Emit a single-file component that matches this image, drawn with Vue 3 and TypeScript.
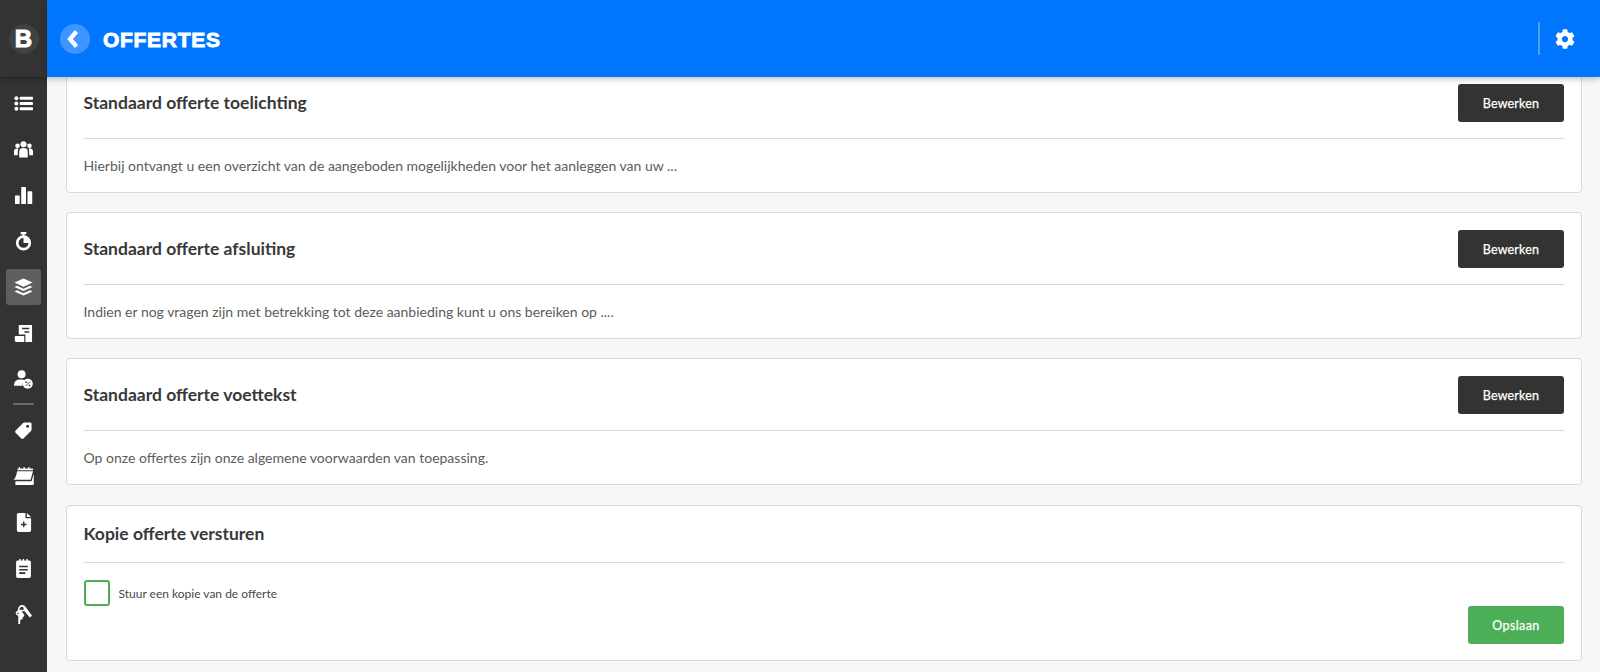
<script setup lang="ts">
interface Card { title: string; text: string }
const cards: Card[] = [
  { title: 'Standaard offerte toelichting', text: 'Hierbij ontvangt u een overzicht van de aangeboden mogelijkheden voor het aanleggen van uw ...' },
  { title: 'Standaard offerte afsluiting', text: 'Indien er nog vragen zijn met betrekking tot deze aanbieding kunt u ons bereiken op ....' },
  { title: 'Standaard offerte voettekst', text: 'Op onze offertes zijn onze algemene voorwaarden van toepassing.' },
]
</script>

<template>
  <div class="app">
    <aside class="side">
      <div class="brand"><span class="logo">B</span></div>
      <nav class="nav">
        <div class="item"><svg viewBox="0 0 20 20"><circle cx="2.500" cy="4.500" r="2.100"/><circle cx="2.500" cy="10" r="2.100"/><circle cx="2.500" cy="15.500" r="2.100"/><rect x="6" y="3" width="14" height="3" rx=".8"/><rect x="6" y="8.500" width="14" height="3" rx=".8"/><rect x="6" y="14" width="14" height="3" rx=".8"/></svg></div>
        <div class="item"><svg viewBox="0 0 20 20"><circle cx="10" cy="4.500" r="3.200"/><circle cx="3.700" cy="6" r="2.400"/><circle cx="16.300" cy="6" r="2.400"/><path d="M5.500 18.500v-6C5.500 9.500 7 8.500 10 8.500s4.500 1 4.500 4v6z"/><path d="M0 16v-4c0-2.200 1.500-3.200 4.700-3.200-.5.900-.7 2.200-.7 3.700V16zM20 16v-4c0-2.200-1.500-3.200-4.700-3.200.5.900.7 2.200.7 3.700V16z"/></svg></div>
        <div class="item"><svg viewBox="0 0 20 20"><rect x="1" y="10" width="5" height="9" rx=".5"/><rect x="7.600" y="1" width="5" height="18" rx=".5"/><rect x="14.200" y="5.500" width="5" height="13.500" rx=".5"/></svg></div>
        <div class="item"><svg viewBox="0 0 20 20"><rect x="7" y="0" width="6" height="2.400" rx=".6"/><rect x="9" y="1.500" width="2" height="3"/><path fill-rule="evenodd" d="M10 3.500a8 8 0 1 1 0 16 8 8 0 0 1 0-16zm0 2.800a5.200 5.200 0 1 0 5.200 5.200H10z"/></svg></div>
        <div class="item active"><svg viewBox="0 0 20 20"><path d="M10 .5l9.500 4.300L10 9.100.5 4.800z"/><path d="M3.200 8.200L10 11.300l6.800-3.100 2.700 1.300L10 13.800.5 9.500z"/><path d="M3.200 12.900L10 16l6.800-3.100 2.700 1.300L10 18.500.5 14.200z"/></svg></div>
        <div class="item"><svg viewBox="0 0 20 20"><path fill-rule="evenodd" d="M5 1h14v18h-7v-8H5zM8.500 4v1.600h7.500V4zM11 7.500v1.600h5V7.500z"/><path d="M2 12.500h8.800V19H3c-1.300 0-2.200-.8-2.200-2.500V14c0-1 .5-1.500 1.200-1.500z"/></svg></div>
        <div class="item"><svg viewBox="0 0 20 20"><circle cx="8" cy="4.500" r="4.200"/><path d="M0 16.500c0-4.500 2.500-6.500 7-6.500 2 0 3.500.4 4.500 1.200A6 6 0 0 0 9 16.500z"/><circle cx="14.500" cy="14.500" r="5.300"/><path d="M12.300 16.700l4.400-4.400" stroke="#333" stroke-width="1"/><circle cx="12.700" cy="12.800" r=".9" fill="#333"/><circle cx="16.300" cy="16.200" r=".9" fill="#333"/></svg></div>
        <div class="rule"></div>
        <div class="item"><svg viewBox="0 0 20 20"><path fill-rule="evenodd" d="M11 1.500h6c.9 0 1.500.6 1.500 1.500v6c0 .6-.2 1-.6 1.400L10 18.300c-.7.700-1.600.7-2.300 0l-6-6c-.7-.7-.7-1.600 0-2.300l7.900-7.900c.4-.4.800-.6 1.400-.6zm3.300 2.400a1.600 1.600 0 1 0 0 3.200 1.600 1.600 0 0 0 0-3.200z"/></svg></div>
        <div class="item wide"><svg viewBox="0 0 24 20"><path d="M6 1.500h1V0h1.300v1.500h3.700V0h1.300v1.500h3.700V0h1.300v1.500H22v1.800H5.500z"/><path d="M5.300 4.500H22l-2.500 9H1.500c2.300-2 3.200-5.500 3.800-9z"/><path d="M22.800 7v10.500c0 .8-.6 1.500-1.500 1.500H3.500v-4h17z"/></svg></div>
        <div class="item"><svg viewBox="0 0 20 20"><path fill-rule="evenodd" d="M5 0h7v5.500h6V18c0 1.200-.8 2-2 2H5c-1.200 0-2-.8-2-2V2c0-1.200.8-2 2-2zm4.500 9v2.200H7.300v1.600h2.200V15h1.500v-2.200h2.200v-1.600H11V9z"/><path d="M13.500 0L18 4.200h-4.500z"/></svg></div>
        <div class="item"><svg viewBox="0 0 20 20"><path fill-rule="evenodd" d="M4 1.500h1.500V0H7v1.500h2.200V0h1.500v1.500H13V0h1.500v1.500H16c1.100 0 1.800.7 1.800 1.800V18c0 1.200-.7 2-1.800 2H4c-1.100 0-1.800-.8-1.800-2V3.300c0-1.100.7-1.800 1.800-1.800zM5.500 7v1.700h9V7zM5.500 10.500v1.700h9v-1.700zM5.500 14v1.700h6.500V14z"/></svg></div>
        <div class="item"><svg viewBox="0 0 20 20"><path fill-rule="evenodd" d="M8.500 0c1.700 0 3 .9 3.800 2.200l6.700 9.100-2.400 1.900-6-7.100c-.6.400-1.200.6-1.800.6v1.600c1.300.4 2 1.300 2 2.400 0 .9-.6 1.600-1.700 2.100v2.200H7.600v.9H6.500v4.100H4.500v-8.500C2.900 10.900 1.800 9.900 1.800 8.500c0-1.300.9-2.200 2.300-2.500C4 2.700 5.700 0 8.500 0zm0 1.900c-1.600 0-2.600 1.300-2.600 2.600 0 .7.300 1.200.9 1.300.1-.6.500-1 1-1 .5 0 .8.300 1 .8.900-.1 1.400-.7 1.400-1.500 0-1.200-.6-2.200-1.700-2.200zM4.700 7.900c-.7 0-1.200.3-1.200 1s.5 1 1.100 1.200c.3-.6.300-1.500.1-2.200z"/></svg></div>
      </nav>
    </aside>

    <main class="main">
      <header class="top">
        <div class="back"><svg viewBox="0 0 14 18"><path d="M9.500 1.500L3 9l6.500 7.500" fill="none" stroke="#fff" stroke-width="4.200"/></svg></div>
        <h1 class="heading">OFFERTES</h1>
        <div class="spacer"></div>
        <div class="sep"></div>
        <svg class="gear" viewBox="0 0 512 512"><path fill="#fff" fill-rule="evenodd" d="M487.400 315.700l-42.600-24.600c4.300-23.200 4.300-47 0-70.200l42.600-24.600c4.900-2.800 7.100-8.600 5.500-14-11.100-35.600-30-67.800-54.700-94.600-3.800-4.100-10-5.100-14.800-2.300L380.800 110c-17.900-15.400-38.500-27.300-60.800-35.100V25.800c0-5.600-3.900-10.500-9.400-11.700-36.700-8.200-74.300-7.800-109.200 0-5.500 1.200-9.400 6.100-9.400 11.700V75c-22.200 7.900-42.800 19.800-60.800 35.100L88.700 85.500c-4.900-2.800-11-1.900-14.800 2.300-24.700 26.700-43.600 58.900-54.700 94.600-1.700 5.400.6 11.200 5.500 14L67.300 221c-4.300 23.200-4.300 47 0 70.200l-42.600 24.600c-4.900 2.800-7.100 8.600-5.500 14 11.100 35.600 30 67.800 54.700 94.600 3.800 4.100 10 5.100 14.800 2.300l42.600-24.600c17.900 15.400 38.500 27.300 60.800 35.100v49.200c0 5.600 3.900 10.500 9.400 11.700 36.700 8.200 74.300 7.800 109.200 0 5.500-1.200 9.400-6.100 9.400-11.700v-49.200c22.200-7.900 42.800-19.800 60.800-35.100l42.600 24.600c4.900 2.800 11 1.900 14.800-2.300 24.700-26.700 43.600-58.900 54.700-94.600 1.500-5.500-.7-11.300-5.600-14.100zM256 336c-44.100 0-80-35.900-80-80s35.900-80 80-80 80 35.900 80 80-35.900 80-80 80z"/></svg>
      </header>

      <div class="content">
        <section v-for="c in cards" :key="c.title" class="card">
          <div class="card-head">
            <h2 class="title">{{ c.title }}</h2>
            <button class="btn dark">Bewerken</button>
          </div>
          <p class="text">{{ c.text }}</p>
        </section>

        <section class="card last">
          <div class="card-head plain">
            <h2 class="title">Kopie offerte versturen</h2>
          </div>
          <label class="check"><span class="box"></span><span>Stuur een kopie van de offerte</span></label>
          <div class="actions"><button class="btn green">Opslaan</button></div>
        </section>
      </div>
    </main>
  </div>
</template>

<style>
html, body { margin: 0; background: #f7f7f7; }
</style>

<style scoped>
.app {
  display: flex;
  height: 672px;
  overflow: hidden;
  font-family: Lato, "Open Sans", sans-serif;
  color: #333;
}
.side {
  width: 47px;
  flex: none;
  background: #333;
}
.brand {
  height: 77px;
  display: flex;
  align-items: center;
  justify-content: center;
  box-shadow: 0 2px 4px rgba(0, 0, 0, .25);
}
.logo {
  width: 30px;
  height: 30px;
  border-radius: 50%;
  background: #414141;
  color: #fff;
  display: flex;
  align-items: center;
  justify-content: center;
  font: 700 24px/1 "Liberation Sans", sans-serif;
  -webkit-text-stroke: 1px #fff;
}
.nav { padding-top: 3px; }
.item {
  height: 46px;
  display: flex;
  align-items: center;
  justify-content: center;
}
.item svg { width: 19px; height: 19px; fill: #fff; }
.item.wide svg { width: 23px; height: 19px; }
.item.active { position: relative; }
.item.active::before {
  content: "";
  position: absolute;
  left: 6px;
  top: 5px;
  width: 35px;
  height: 36px;
  border-radius: 3px;
  background: #5f5f5f;
}
.item.active svg { position: relative; }
.rule { height: 2px; margin: 1px 13px 2px; background: #6a6a6a; }
.main {
  flex: 1;
  min-width: 0;
  display: flex;
  flex-direction: column;
}
.top {
  position: relative;
  z-index: 2;
  height: 77px;
  flex: none;
  background: #0076ff;
  display: flex;
  align-items: center;
  padding: 0 25px 0 13px;
  box-shadow: 0 2px 6px rgba(0, 0, 0, .25);
}
.back {
  width: 30px;
  height: 30px;
  border-radius: 50%;
  background: #3f95ff;
  display: flex;
  align-items: center;
  justify-content: center;
}
.back svg { width: 14px; height: 18px; margin-right: 2px; }
.heading {
  margin: 1px 0 0 13px;
  color: #fff;
  font: 700 21px/1 "Liberation Sans", sans-serif;
  letter-spacing: .7px;
  -webkit-text-stroke: .9px #fff;
}
.spacer { flex: 1; }
.sep { width: 2px; height: 33px; background: rgba(255, 255, 255, .3); margin-right: 15px; }
.gear { width: 20px; height: 20px; }
.content {
  margin-top: -11px;
  padding: 0 18px 0 19px;
  display: flex;
  flex-direction: column;
  gap: 19px;
}
.card {
  height: 127px;
  box-sizing: border-box;
  background: #fff;
  border: 1px solid #d9d9d9;
  border-radius: 4px;
  padding: 0 17px 0 16.500px;
}
.card.last { height: 156px; margin-top: 1px; }
.card-head {
  height: 72px;
  box-sizing: border-box;
  padding-top: 17px;
  display: flex;
  justify-content: space-between;
  border-bottom: 1px solid #d9d9d9;
}
.card-head.plain { height: 57px; padding-top: 0; align-items: center; }
.title {
  margin: 0;
  font-size: 17.500px;
  font-weight: 700;
  line-height: 38px;
  color: #383838;
}
.text {
  margin: 18px 0 0;
  font-size: 14px;
  line-height: 18px;
  color: #5c5c5c;
}
.btn {
  height: 38px;
  border: 0;
  border-radius: 3px;
  color: #fff;
  font: 400 12.500px Lato, sans-serif;
  letter-spacing: .2px;
  -webkit-text-stroke: .25px #fff;
}
.dark { width: 106px; background: #333; }
.green { width: 96px; background: #4caf58; letter-spacing: .4px; }
.check {
  display: flex;
  align-items: center;
  gap: 9px;
  margin-top: 17px;
  font-size: 12px;
  color: #484848;
}
.box {
  width: 26px;
  height: 26px;
  box-sizing: border-box;
  border: 2px solid #4caf58;
  border-radius: 3px;
  flex: none;
}
.actions { display: flex; justify-content: flex-end; }
</style>
